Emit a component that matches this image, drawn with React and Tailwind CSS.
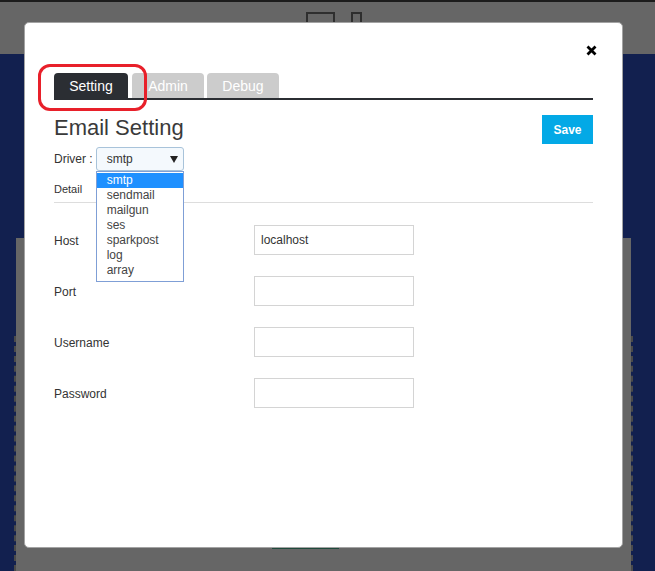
import React from 'react';

const drivers = ['smtp', 'sendmail', 'mailgun', 'ses', 'sparkpost', 'log', 'array'];

const fields = [
  { label: 'Host', value: 'localhost' },
  { label: 'Port', value: '' },
  { label: 'Username', value: '' },
  { label: 'Password', value: '' },
];

/**
 * Settings modal shown over a dimmed page.
 */
const App = () => {
  return (
    <div className="relative w-[655px] h-[571px] overflow-hidden bg-[#12204f] font-['Liberation_Sans',Arial,sans-serif]">
      {/* dimmed page behind the modal */}
      <div className="h-[54px] bg-[#666666] border-t-2 border-[#1c1c1c] flex items-start pt-[10px] pl-[306px] gap-[16px]">
        <div className="w-[29px] h-[20px] border-2 border-[#2e2e2e]" />
        <div className="w-[11px] h-[20px] border-2 border-[#2e2e2e]" />
      </div>
      <div className="mt-[184px] ml-[14px] w-[619px] h-[333px] flex flex-col">
        <div className="mx-[2px] h-[98px] bg-[#666666]" />
        <div className="flex-1 bg-[#666666] bg-clip-padding border-x-2 border-dashed border-[#4a4a4a]">
          <div className="mt-[211px] ml-[256px] w-[67px] h-[2px] bg-[#1f4a3c]" />
        </div>
      </div>

      {/* modal */}
      <div className="absolute left-[24px] top-[22px] w-[599px] h-[526px] bg-white rounded-[5px] border border-[#a3a3a3] px-[29px]">
        <div className="h-[50px] flex justify-end items-start pt-[22px] -mr-[4px]">
          <svg width="11" height="11" viewBox="0 0 11 11">
            <path d="M1.5 1.5 L9.5 9.5 M9.5 1.5 L1.5 9.5" stroke="#000" strokeWidth="2.8" />
          </svg>
        </div>

        {/* tabs */}
        <div className="flex items-end h-[27px] border-b-2 border-[#2b2e33]">
          <div className="w-[74px] h-[25px] pt-[2px] rounded-t-[4px] bg-[#2b2e33] text-white text-[14px] flex items-center justify-center">Setting</div>
          <div className="ml-[4px] w-[72px] h-[25px] pt-[2px] rounded-t-[4px] bg-[#cccccc] text-white text-[14px] flex items-center justify-center">Admin</div>
          <div className="ml-[3px] w-[72px] h-[25px] pt-[2px] rounded-t-[4px] bg-[#cccccc] text-white text-[14px] flex items-center justify-center">Debug</div>
        </div>

        {/* header */}
        <div className="mt-[15px] flex justify-between items-start">
          <h1 className="text-[22px] leading-[26px] text-[#3a3a3a]">Email Setting</h1>
          <button className="w-[51px] h-[29px] bg-[#03a9e6] text-white text-[12px] font-bold">Save</button>
        </div>

        {/* driver */}
        <div className="mt-[3px] flex items-center text-[12px] text-[#333]">
          <span>Driver :</span>
          <div className="relative ml-[3px] w-[88px] h-[24px] rounded-[3px] border border-[#a8c3da] bg-[#f4f9fd] flex items-center pl-[10px] pr-[5px] justify-between">
            <span>smtp</span>
            <svg width="8" height="7" viewBox="0 0 8 7">
              <path d="M0 0 L8 0 L4 7 Z" fill="#222" />
            </svg>
            <ul className="absolute left-[-1px] top-[23px] w-[88px] bg-white border border-[#7f9fd6] pt-[1px] pb-[3px] z-10">
              {drivers.map((d, i) => (
                <li
                  key={d}
                  className={
                    i === 0
                      ? 'h-[15px] leading-[15px] pl-[10px] bg-[#1e90ff] text-white'
                      : 'h-[15px] leading-[15px] pl-[10px] text-[#444]'
                  }
                >
                  {d}
                </li>
              ))}
            </ul>
          </div>
        </div>

        <div className="mt-[12px] text-[11px] leading-[13px] text-[#333]">Detail</div>
        <div className="mt-[6px] border-t border-[#dddddd]" />

        {/* fields */}
        <div className="mt-[22px] flex flex-col gap-[21px]">
          {fields.map((f) => (
            <div key={f.label} className="flex items-center text-[12px] text-[#333]">
              <span className="w-[200px] pt-[2px]">{f.label}</span>
              <div className="w-[160px] h-[30px] border border-[#d4d4d4] flex items-center pl-[6px] text-[12px] text-[#333]">
                {f.value}
              </div>
            </div>
          ))}
        </div>

        {/* annotation ring */}
        <div className="absolute left-[13px] top-[41px] w-[109px] h-[47px] rounded-[12px] border-[3px] border-[#e8202a]" />
      </div>
    </div>
  );
};

export default App;
